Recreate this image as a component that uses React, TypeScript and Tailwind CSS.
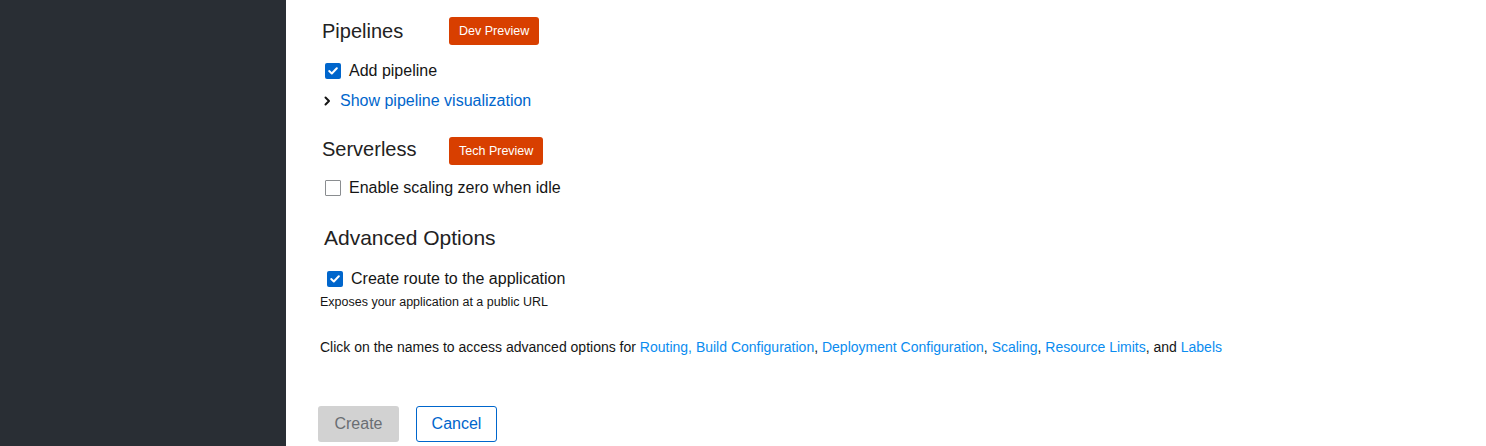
const Check = ({ checked }: { checked: boolean }) =>
  checked ? (
    <span className="flex h-[16px] w-[16px] items-center justify-center rounded-[2px] bg-[#0066cc]">
      <svg width="10" height="8" viewBox="0 0 10 8" fill="none">
        <path d="M1.2 4.1 L3.8 6.5 L8.8 1.3" stroke="white" strokeWidth="2" strokeLinecap="round" strokeLinejoin="round" />
      </svg>
    </span>
  ) : (
    <span className="block h-[16px] w-[16px] rounded-[1px] border border-[#8a8d90] bg-white" />
  );

const Badge = ({ label }: { label: string }) => (
  <span className="flex h-[28px] items-center rounded-[3px] bg-[#d83f00] px-[10px] text-[12.5px] text-white">
    {label}
  </span>
);

const Link = ({ children }: { children: React.ReactNode }) => (
  <a className="text-[#0a8cf0]">{children}</a>
);

export default function App() {
  return (
    <div className="flex h-[446px] w-full overflow-hidden bg-white font-['Liberation_Sans',Arial,sans-serif] text-[#151515]">
      {/* sidebar */}
      <div className="w-[286px] shrink-0 bg-[#292e34]" />

      {/* form */}
      <div className="flex-1 pl-[32px]">
        {/* PIPELINES */}
        <div className="ml-[4px] mt-[17px] flex h-[28px] items-center">
          <h2 className="w-[127px] text-[20px] leading-none text-[#222]">Pipelines</h2>
          <Badge label="Dev Preview" />
        </div>
        <label className="ml-[7px] mt-[14px] flex h-[24px] items-center gap-[8px] text-[16px]">
          <Check checked />
          Add pipeline
        </label>
        <div className="ml-[6px] mt-[6px] flex h-[24px] items-center gap-[9px] text-[16px]">
          <svg width="7" height="10" viewBox="0 0 7 10">
            <path d="M1.5 1.5 L5 5 L1.5 8.5" stroke="#151515" strokeWidth="2" fill="none" strokeLinecap="round" strokeLinejoin="round" />
          </svg>
          <a className="text-[#0066cc]">Show pipeline visualization</a>
        </div>

        {/* SERVERLESS */}
        <div className="ml-[4px] mt-[24px] flex h-[28px] items-center">
          <h2 className="w-[127px] pb-[4px] text-[20px] leading-none text-[#222]">Serverless</h2>
          <Badge label="Tech Preview" />
        </div>
        <label className="ml-[7px] mt-[11px] flex h-[24px] items-center gap-[8px] text-[16px]">
          <Check checked={false} />
          Enable scaling zero when idle
        </label>

        {/* ADVANCED OPTIONS */}
        <h2 className="ml-[6px] mt-[24px] h-[28px] text-[21px] leading-[28px] text-[#222]">Advanced Options</h2>
        <label className="ml-[9px] mt-[15px] flex h-[24px] items-center gap-[8px] text-[16px]">
          <Check checked />
          Create route to the application
        </label>
        <p className="ml-[2px] mt-[3px] text-[12.5px] leading-[16px]">Exposes your application at a public URL</p>

        <p className="ml-[2px] mt-[27px] text-[14px] leading-[20px]">
          Click on the names to access advanced options for <Link>Routing, Build Configuration</Link>,{" "}
          <Link>Deployment Configuration</Link>, <Link>Scaling</Link>, <Link>Resource Limits</Link>, and{" "}
          <Link>Labels</Link>
        </p>

        {/* ACTIONS */}
        <div className="mt-[49px] flex gap-[17px]">
          <button className="h-[36px] w-[81px] rounded-[3px] bg-[#d2d2d2] text-[16px] text-[#6a6e73]">Create</button>
          <button className="h-[36px] w-[81px] rounded-[3px] border border-[#0066cc] bg-white text-[16px] text-[#0066cc]">
            Cancel
          </button>
        </div>
      </div>
    </div>
  );
}
